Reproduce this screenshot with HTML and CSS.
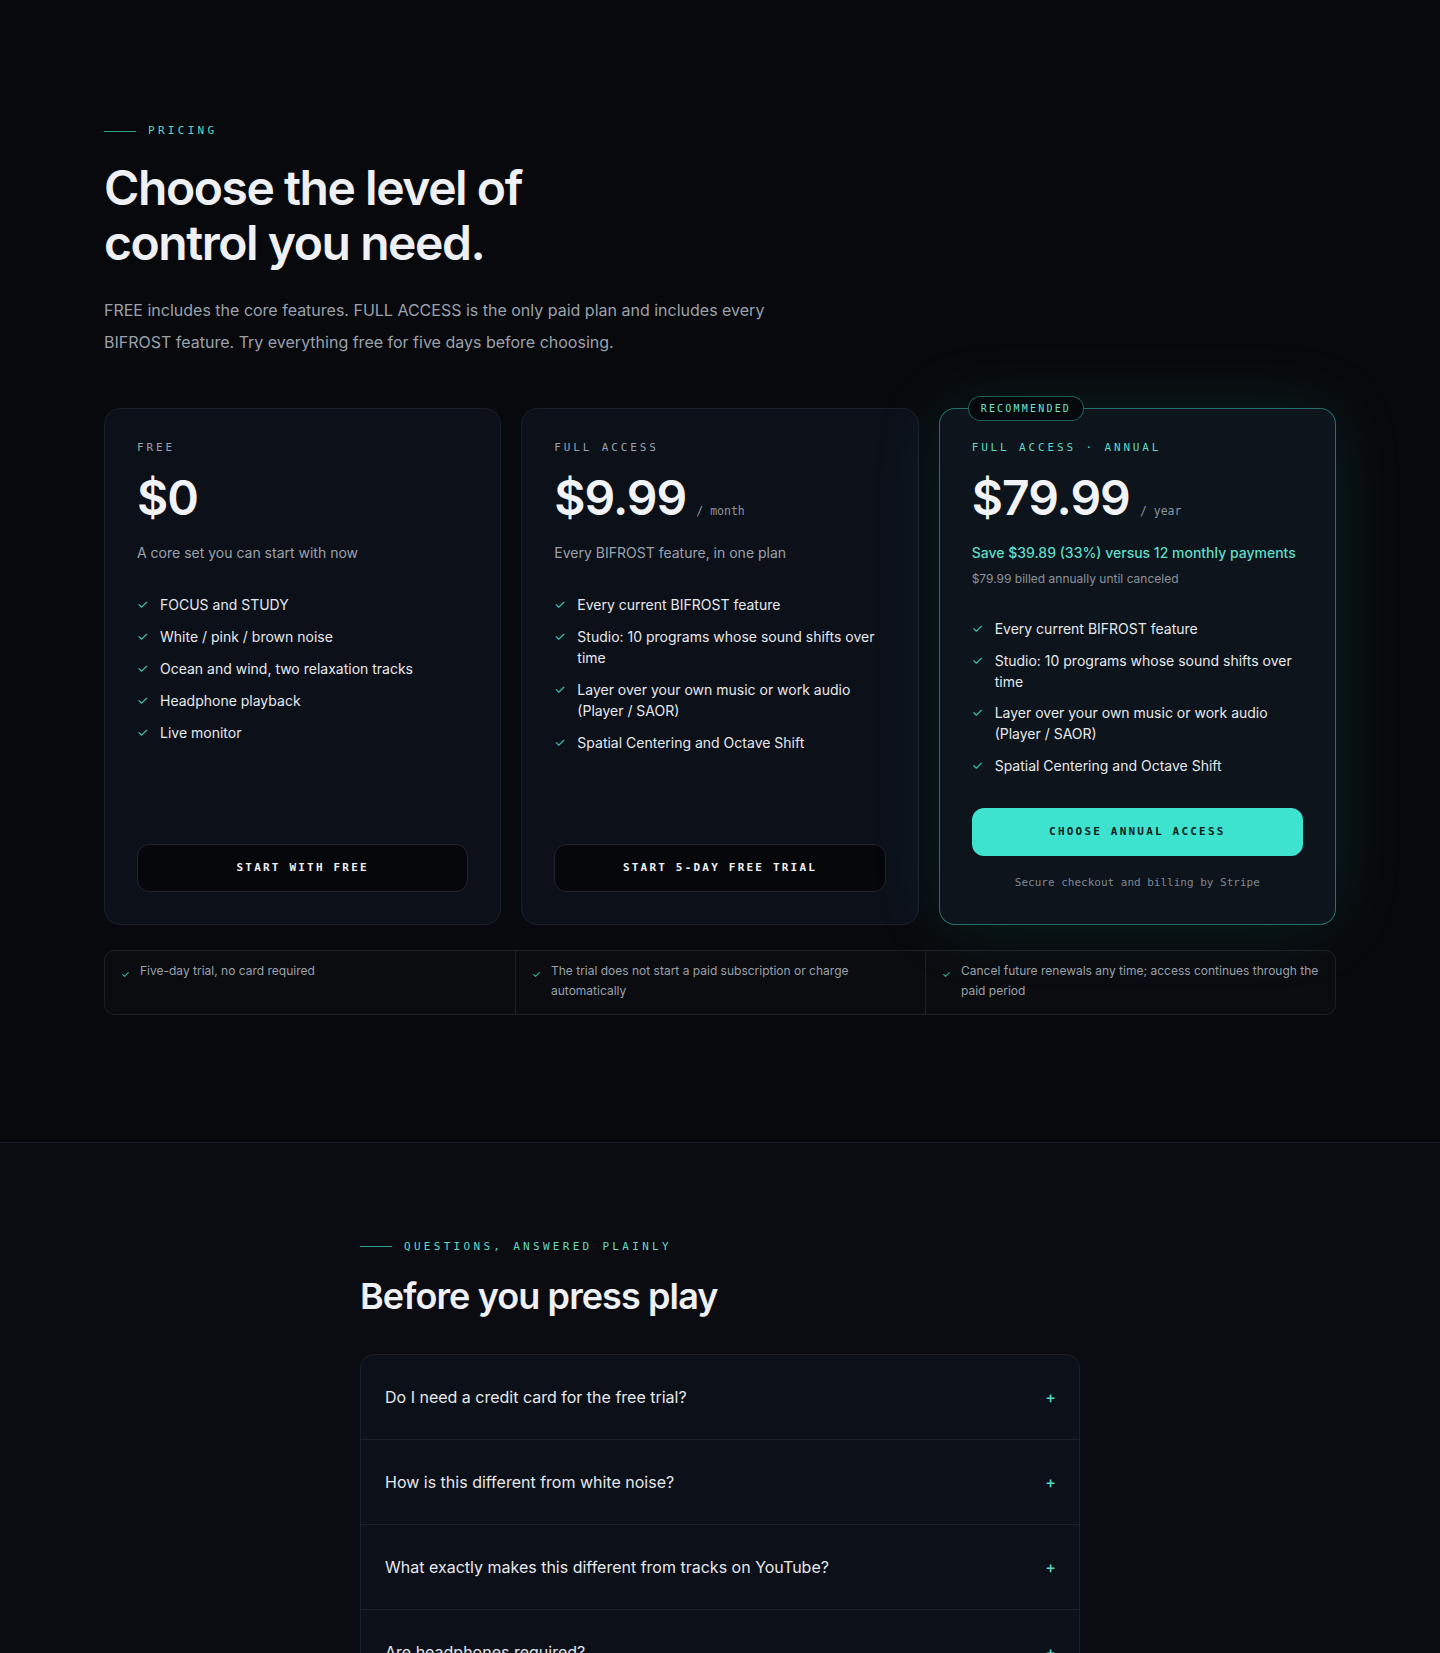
FILE: index.html
```html
<!DOCTYPE html>
<html lang="en">
<head>
<meta charset="utf-8">
<title>Pricing</title>
<link rel="stylesheet" href="styles.css">
</head>
<body>
<section class="pricing">
  <div class="wrap">
    <div class="eyebrow"><span class="eyebrow-line"></span><span>PRICING</span></div>
    <h1 class="title">Choose the level of<br>control you need.</h1>
    <p class="lead">FREE includes the core features. FULL ACCESS is the only paid plan and includes every BIFROST feature. Try everything free for five days before choosing.</p>

    <div class="plans">
      <div class="plan">
        <div class="plan-label">FREE</div>
        <div class="price-row"><span class="price">$0</span></div>
        <div class="plan-sub">A core set you can start with now</div>
        <ul class="features">
          <li><span class="ck">✓</span><span>FOCUS and STUDY</span></li>
          <li><span class="ck">✓</span><span>White / pink / brown noise</span></li>
          <li><span class="ck">✓</span><span>Ocean and wind, two relaxation tracks</span></li>
          <li><span class="ck">✓</span><span>Headphone playback</span></li>
          <li><span class="ck">✓</span><span>Live monitor</span></li>
        </ul>
        <a class="btn btn-dark">START WITH FREE</a>
      </div>

      <div class="plan">
        <div class="plan-label">FULL ACCESS</div>
        <div class="price-row"><span class="price">$9.99</span><span class="per">/ month</span></div>
        <div class="plan-sub">Every BIFROST feature, in one plan</div>
        <ul class="features">
          <li><span class="ck">✓</span><span>Every current BIFROST feature</span></li>
          <li><span class="ck">✓</span><span>Studio: 10 programs whose sound shifts over time</span></li>
          <li><span class="ck">✓</span><span>Layer over your own music or work audio (Player / SAOR)</span></li>
          <li><span class="ck">✓</span><span>Spatial Centering and Octave Shift</span></li>
        </ul>
        <a class="btn btn-dark">START 5-DAY FREE TRIAL</a>
      </div>

      <div class="plan plan-featured">
        <div class="badge">RECOMMENDED</div>
        <div class="plan-label teal">FULL ACCESS · ANNUAL</div>
        <div class="price-row"><span class="price">$79.99</span><span class="per">/ year</span></div>
        <div class="save">Save $39.89 (33%) versus 12 monthly payments</div>
        <div class="billed">$79.99 billed annually until canceled</div>
        <ul class="features features-featured">
          <li><span class="ck">✓</span><span>Every current BIFROST feature</span></li>
          <li><span class="ck">✓</span><span>Studio: 10 programs whose sound shifts over time</span></li>
          <li><span class="ck">✓</span><span>Layer over your own music or work audio (Player / SAOR)</span></li>
          <li><span class="ck">✓</span><span>Spatial Centering and Octave Shift</span></li>
        </ul>
        <a class="btn btn-teal">CHOOSE ANNUAL ACCESS</a>
        <div class="secure">Secure checkout and billing by Stripe</div>
      </div>
    </div>

    <div class="trust">
      <div class="trust-item"><span class="tck">✓</span><span>Five-day trial, no card required</span></div>
      <div class="trust-item"><span class="tck">✓</span><span>The trial does not start a paid subscription or charge automatically</span></div>
      <div class="trust-item"><span class="tck">✓</span><span>Cancel future renewals any time; access continues through the paid period</span></div>
    </div>
  </div>
</section>

<section class="faq">
  <div class="faq-wrap">
    <div class="eyebrow"><span class="eyebrow-line"></span><span>QUESTIONS, ANSWERED PLAINLY</span></div>
    <h2 class="faq-title">Before you press play</h2>
    <div class="faq-list">
      <div class="faq-row"><span>Do I need a credit card for the free trial?</span><span class="plus">+</span></div>
      <div class="faq-row"><span>How is this different from white noise?</span><span class="plus">+</span></div>
      <div class="faq-row"><span>What exactly makes this different from tracks on YouTube?</span><span class="plus">+</span></div>
      <div class="faq-row"><span>Are headphones required?</span><span class="plus">+</span></div>
    </div>
  </div>
</section>
</body>
</html>
```

FILE: styles.css
```css
* { box-sizing: border-box; }
html, body { margin: 0; padding: 0; }
body {
  background: #08090d;
  font-family: Inter, "Noto Sans", sans-serif;
  color: #e4e7eb;
}

.pricing {
  padding: 124px 104px 127px;
}
.wrap { max-width: 1232px; margin: 0 auto; }

.eyebrow {
  display: flex;
  align-items: center;
  gap: 12px;
  font-family: "DejaVu Sans Mono", "Liberation Mono", monospace;
  font-size: 11px;
  line-height: 14px;
  letter-spacing: 0.3em;
  color: #5fd8c5;
}
.eyebrow-line {
  display: block;
  width: 32px;
  height: 1px;
  background: #2d9f8f;
}

.title {
  margin: 22px 0 0;
  font-size: 48px;
  line-height: 55px;
  font-weight: 600;
  letter-spacing: -0.03em;
  color: #eef0f4;
}

.lead {
  margin: 25px 0 0;
  max-width: 700px;
  font-size: 16px;
  line-height: 31.5px;
  color: #9aa1ac;
}

.plans {
  margin-top: 50px;
  display: grid;
  grid-template-columns: repeat(3, 1fr);
  gap: 20px;
}

.plan {
  position: relative;
  display: flex;
  flex-direction: column;
  padding: 32px;
  background: #0c1019;
  border: 1px solid #1a1f29;
  border-radius: 16px;
}
.plan-featured {
  padding-bottom: 33px;
  background: #0d141b;
  border-color: rgba(62, 224, 204, 0.45);
  box-shadow: 0 0 70px rgba(30, 190, 160, 0.13);
}

.badge {
  position: absolute;
  top: -13px;
  left: 28px;
  height: 25px;
  padding: 0 12px;
  display: flex;
  align-items: center;
  background: #06090c;
  border: 1px solid rgba(62, 224, 204, 0.4);
  border-radius: 13px;
  font-family: "DejaVu Sans Mono", "Liberation Mono", monospace;
  font-size: 10px;
  letter-spacing: 0.22em;
  color: #6fe0cf;
}

.plan-label {
  font-family: "DejaVu Sans Mono", "Liberation Mono", monospace;
  font-size: 11px;
  line-height: 13px;
  letter-spacing: 0.26em;
  color: #9aa2ad;
}
.plan-label.teal { color: #5fd8c5; }

.price-row {
  margin-top: 20px;
  display: flex;
  align-items: baseline;
  gap: 10px;
}
.price {
  font-size: 48px;
  line-height: 48px;
  font-weight: 600;
  letter-spacing: -0.02em;
  color: #f1f3f6;
}
.per {
  font-family: "DejaVu Sans Mono", "Liberation Mono", monospace;
  font-size: 11.5px;
  color: #8b929d;
}

.plan-sub {
  margin-top: 20px;
  font-size: 14px;
  line-height: 22px;
  color: #9aa1ac;
}
.save {
  margin-top: 20px;
  font-size: 14px;
  line-height: 22px;
  font-weight: 500;
  color: #5fdcc8;
}
.billed {
  margin-top: 6px;
  font-size: 12px;
  line-height: 18px;
  color: #8b929d;
}

.features {
  list-style: none;
  margin: 30px 0 0;
  padding: 0;
  display: flex;
  flex-direction: column;
  gap: 11px;
}
.features li {
  display: flex;
  font-size: 14px;
  line-height: 21px;
  color: #e6e9ed;
}
.features-featured { gap: 10.5px; }
.ck {
  flex: 0 0 23px;
  color: #3ec9b2;
  font-size: 13px;
}

.btn {
  display: flex;
  align-items: center;
  justify-content: center;
  height: 48px;
  border-radius: 12px;
  font-family: "DejaVu Sans Mono", "Liberation Mono", monospace;
  font-size: 11px;
  font-weight: 700;
  letter-spacing: 0.2em;
  cursor: pointer;
}
.btn-dark {
  margin-top: auto;
  background: #05070a;
  border: 1px solid #1f252e;
  color: #f0f2f5;
}
.btn-teal {
  margin-top: 32px;
  background: #3de3cf;
  color: #0a1c1a;
}
.secure {
  margin-top: 19px;
  text-align: center;
  font-family: "DejaVu Sans Mono", "Liberation Mono", monospace;
  font-size: 11px;
  line-height: 16px;
  color: #7f8692;
}

.trust {
  margin-top: 25px;
  display: grid;
  grid-template-columns: repeat(3, 1fr);
  background: #0a0c10;
  border: 1px solid #1c2129;
  border-radius: 10px;
}
.trust-item {
  display: flex;
  align-items: flex-start;
  padding: 10px 14px 12px 16px;
  font-size: 12px;
  line-height: 20.5px;
  color: #9aa1ac;
}
.trust-item + .trust-item { border-left: 1px solid #1c2129; }
.tck {
  flex: 0 0 19px;
  color: #3ec9b2;
  font-size: 10px;
  padding-top: 3px;
}

.faq {
  background: #0a0c12;
  border-top: 1px solid #171b23;
  padding: 97px 0 120px;
}
.faq-wrap {
  width: 720px;
  margin: 0 auto;
}
.faq-title {
  margin: 21px 0 0;
  font-size: 36px;
  line-height: 43px;
  font-weight: 600;
  letter-spacing: -0.025em;
  color: #eef0f4;
}
.faq-list {
  margin-top: 36px;
  background: #0c1019;
  border: 1px solid #1a1f28;
  border-radius: 14px;
}
.faq-row {
  display: flex;
  justify-content: space-between;
  align-items: center;
  padding: 30px 24px;
  font-size: 16px;
  line-height: 24px;
  color: #e6e8ec;
}
.faq-row + .faq-row { border-top: 1px solid #1a1f28; }
.plus {
  color: #4fd8c4;
  font-size: 16px;
  font-weight: 500;
  margin-right: -1px;
}
```
